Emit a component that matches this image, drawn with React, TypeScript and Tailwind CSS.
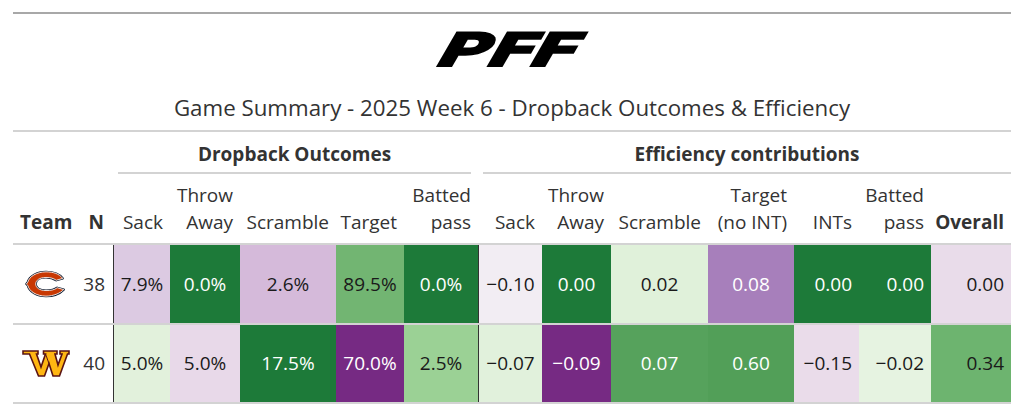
import React from "react";

type Cell = { v: string; bg: string; light: boolean };

const GRID =
  "grid grid-cols-[65px_35px_57px_70px_96px_68px_74px_64px_69px_97px_86px_65px_72px_80px]";

const labels: { lines: string[]; bold?: boolean; align: "left" | "right" }[] = [
  { lines: ["Team"], bold: true, align: "left" },
  { lines: ["N"], bold: true, align: "right" },
  { lines: ["Sack"], align: "right" },
  { lines: ["Throw", "Away"], align: "right" },
  { lines: ["Scramble"], align: "right" },
  { lines: ["Target"], align: "right" },
  { lines: ["Batted", "pass"], align: "right" },
  { lines: ["Sack"], align: "right" },
  { lines: ["Throw", "Away"], align: "right" },
  { lines: ["Scramble"], align: "right" },
  { lines: ["Target", "(no INT)"], align: "right" },
  { lines: ["INTs"], align: "right" },
  { lines: ["Batted", "pass"], align: "right" },
  { lines: ["Overall"], bold: true, align: "right" },
];

const valueAlign: ("center" | "right")[] = [
  "center",
  "center",
  "center",
  "center",
  "center",
  "center",
  "center",
  "center",
  "center",
  "right",
  "right",
  "right",
];

const rows: { team: "CHI" | "WAS"; n: string; h: string; cells: Cell[] }[] = [
  {
    team: "CHI",
    n: "38",
    h: "h-[80px]",
    cells: [
      { v: "7.9%", bg: "#dccae2", light: true },
      { v: "0.0%", bg: "#1d7a39", light: false },
      { v: "2.6%", bg: "#d5bada", light: true },
      { v: "89.5%", bg: "#72b572", light: true },
      { v: "0.0%", bg: "#1d7a39", light: false },
      { v: "\u22120.10", bg: "#f2edf3", light: true },
      { v: "0.00", bg: "#1d7a39", light: false },
      { v: "0.02", bg: "#e0f1da", light: true },
      { v: "0.08", bg: "#a77fbb", light: false },
      { v: "0.00", bg: "#1d7a39", light: false },
      { v: "0.00", bg: "#1d7a39", light: false },
      { v: "0.00", bg: "#e9dcea", light: true },
    ],
  },
  {
    team: "WAS",
    n: "40",
    h: "h-[79px]",
    cells: [
      { v: "5.0%", bg: "#e2f1dc", light: true },
      { v: "5.0%", bg: "#e8d9e9", light: true },
      { v: "17.5%", bg: "#1d7a39", light: false },
      { v: "70.0%", bg: "#762a83", light: false },
      { v: "2.5%", bg: "#9bd195", light: true },
      { v: "\u22120.07", bg: "#e1f1dc", light: true },
      { v: "\u22120.09", bg: "#762a83", light: false },
      { v: "0.07", bg: "#56a25c", light: false },
      { v: "0.60", bg: "#529f58", light: false },
      { v: "\u22120.15", bg: "#eadcea", light: true },
      { v: "\u22120.02", bg: "#e6f3e1", light: true },
      { v: "0.34", bg: "#6db46f", light: true },
    ],
  },
];

function BearsLogo() {
  const d =
    "M40 9 C36 4 30 2 22 2 C12 2 4 7 2.5 13 L1 15 L2.5 16.5 C4 23 12 28 22 28 C30 28 37 25 41 21 L34 19 C31 21.5 27 22 22 22 C15 22 11 19 11 15 C11 11 15 8 22 8 C27 8 30 9 33 11 Z";
  return (
    <svg width="42" height="28" viewBox="0 0 44 30">
      <path d={d} fill="#0b162a" stroke="#0b162a" strokeWidth="2.4" strokeLinejoin="round" />
      <path d={d} fill="#c83803" stroke="#ffffff" strokeWidth="0.9" strokeLinejoin="round" />
    </svg>
  );
}

function CommandersLogo() {
  const d =
    "M1 1 H16 V4 H14.5 L19 17 L23.5 4 H21.5 V1 H35 V4 H33 L36 15 L40 4 H38 V1 H47 V4 H45.5 L37.5 26 H31 L27 13.5 L22.5 26 H16.5 L7.5 4 H1 Z";
  return (
    <svg width="48" height="27" viewBox="0 0 48 27">
      <path d={d} fill="#ffb612" stroke="#5a1414" strokeWidth="1.6" strokeLinejoin="miter" />
      <path d="M23.5 4 L27 13.5" stroke="#5a1414" strokeWidth="1" fill="none" />
    </svg>
  );
}

function PffLogo() {
  return (
    <div className="h-[35px] w-[145px] flex items-center justify-center overflow-visible">
      <span className="inline-block font-['Roboto','Liberation_Sans',sans-serif] font-black text-[47px] leading-[35px] text-black skew-x-[-20deg] scale-x-[1.6] tracking-[1px] [-webkit-text-stroke:2px_#000]">
        PFF
      </span>
    </div>
  );
}

export default function App() {
  return (
    <div className="bg-white w-[1024px] h-[416px] font-['Open_Sans','Noto_Sans',sans-serif] text-[#333333]">
      <div className="ml-[13px] w-[998px] pt-[12px]">
        <div className="border-t-2 border-[#a8a8a8]">
          <div className="h-[79px] pt-[18px] flex justify-center">
            <PffLogo />
          </div>
          <div className="h-[30px] leading-[30px] text-[22.3px] text-center text-[#333333]">
            Game Summary - 2025 Week 6 - Dropback Outcomes &amp; Efficiency
          </div>
          <div className="h-[9px] border-b-2 border-[#d3d3d3]" />
        </div>

        <div className={`${GRID} h-[42px]`}>
          <div className="col-span-2" />
          <div className="col-span-5 h-full pl-[5px] pr-[7px]">
            <div className="h-full border-b-2 border-[#d3d3d3] flex items-end justify-center pb-[4px] font-bold text-[19px] leading-[27px]">
              Dropback Outcomes
            </div>
          </div>
          <div className="col-span-7 h-full pl-[5px]">
            <div className="h-full border-b-2 border-[#d3d3d3] flex items-end justify-center pb-[4px] font-bold text-[19px] leading-[27px]">
              Efficiency contributions
            </div>
          </div>
        </div>

        <div className={`${GRID} h-[71px] border-b-2 border-[#d3d3d3]`}>
          {labels.map((l, i) => (
            <div
              key={i}
              className={`flex flex-col justify-end pb-[7px] text-[19px] leading-[27px] whitespace-nowrap ${
                l.bold ? "font-bold" : ""
              } ${l.align === "left" ? "items-start pl-[7px]" : "items-end"} ${
                i === 1 ? "pr-[9px]" : l.align === "right" ? "pr-[7px]" : ""
              }`}
            >
              {l.lines.map((t, j) => (
                <span key={j}>{t}</span>
              ))}
            </div>
          ))}
        </div>

        {rows.map((r, ri) => (
          <div key={ri} className={`${GRID} ${r.h} border-b-2 border-[#d3d3d3]`}>
            <div className="flex items-center justify-center">
              {r.team === "CHI" ? <BearsLogo /> : <CommandersLogo />}
            </div>
            <div className="flex items-center justify-end pr-[8px] text-[19px]">{r.n}</div>
            {r.cells.map((c, ci) => (
              <div
                key={ci}
                className={`flex items-center text-[19px] whitespace-nowrap ${
                  valueAlign[ci] === "right" ? "justify-end pr-[7px]" : "justify-center"
                } ${ci === 0 || ci === 5 ? "border-l border-[#333333]" : ""} ${
                  c.light ? "text-[#1a1a1a]" : "text-white"
                }`}
                style={{ backgroundColor: c.bg }}
              >
                {c.v}
              </div>
            ))}
          </div>
        ))}
      </div>
    </div>
  );
}
